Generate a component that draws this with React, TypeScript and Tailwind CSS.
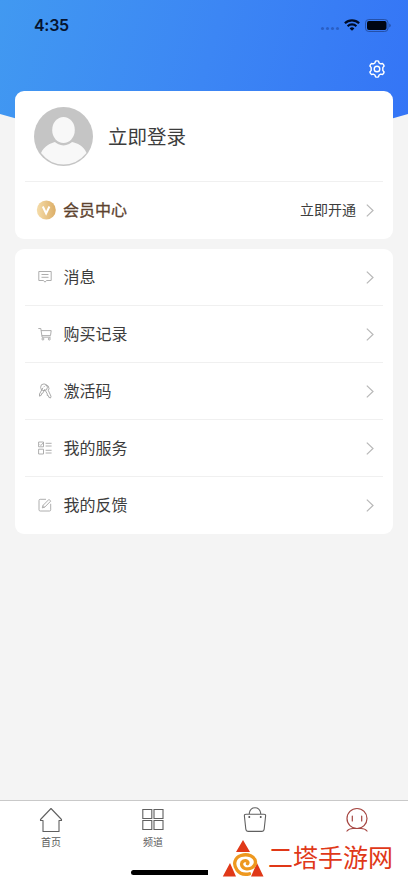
import React from 'react';

type IconProps = { className?: string };

const ChevronIcon: React.FC = () => (
  <svg className="w-2 h-[13px] shrink-0" viewBox="0 0 8 13" fill="none" stroke="#b8b8b8" strokeWidth="1.2">
    <path d="M.8.6 7 6.500.8 12.400" />
  </svg>
);

const GearIcon: React.FC<IconProps> = ({ className }) => (
  <svg className={className} viewBox="0 0 18 18" fill="none" stroke="#fff" strokeWidth="1.4" strokeLinejoin="round">
    <path d="M7.500 1.200Q9 .6 10.500 1.200L11.100 3 12.700 3.900 14.500 3.500Q15.800 4.500 16.100 6L14.800 7.600V10.400L16.100 12Q15.700 13.600 14.500 14.500L12.700 14.100 11.100 15 10.500 16.800Q9 17.400 7.500 16.800L6.900 15 5.300 14.100 3.500 14.500Q2.200 13.500 1.900 12L3.200 10.400V7.600L1.900 6Q2.300 4.400 3.500 3.500L5.300 3.900 6.900 3z" />
    <circle cx="9" cy="9" r="2.800" />
  </svg>
);

const MessageIcon: React.FC = () => (
  <svg className="size-3.5" viewBox="0 0 14 14" fill="none" stroke="#a5a5a5" strokeWidth=".9">
    <path d="M.8 1.500h12.400v9H8.500L7 12.200l-1.500-1.700H.8z" strokeLinejoin="round" />
    <path d="M3.500 4.500h7M3.500 7.300h7" />
  </svg>
);

const CartIcon: React.FC = () => (
  <svg className="size-3.5" viewBox="0 0 14 14" fill="none" stroke="#a5a5a5" strokeWidth=".9">
    <path d="M.3 1.500h2.500l1.300 8.700h8.600M3.100 3.600h10.100l-.7 5H3.900" />
    <circle cx="4.900" cy="12" r="1" />
    <circle cx="11.300" cy="12" r="1" />
  </svg>
);

const KeysIcon: React.FC = () => (
  <svg className="w-3.5 h-4" viewBox="0 0 14 16" fill="none" stroke="#a0a0a0" strokeWidth=".9" strokeLinejoin="round">
    <circle cx="6" cy="4.300" r="3.400" />
    <path d="M5 4.700 1.500 11v2.200l1.800-1 .2-1.500 1.200-.4L7 6" />
    <path d="M7.500 2.300Q11 2 11 5.500L10.300 7.500l2.700 5.800-.5 1.700-1.700-.7-.3-1.500-1.300-.4.100-1.500L7.300 7.500" />
    <path d="M5.800 3.500h.8" />
  </svg>
);

const ServiceIcon: React.FC = () => (
  <svg className="size-3.5" viewBox="0 0 14 14" fill="none" stroke="#a5a5a5" strokeWidth=".9">
    <path d="M.6 1h4.900v4.800H.6zM.6 8.200h4.900V13H.6zM1.800 3.400l1.100 1.100 2.600-3M7.600 2.300h6M7.600 5h6M7.600 9.300h6M7.600 12h6" />
  </svg>
);

const FeedbackIcon: React.FC = () => (
  <svg className="size-3.5" viewBox="0 0 14 14" fill="none" stroke="#a5a5a5" strokeWidth=".9" strokeLinejoin="round">
    <path d="M8 1.300H2.200Q1 1.300 1 2.500v9.300Q1 13 2.200 13h9.300q1.200 0 1.200-1.200V5.800" />
    <path d="m4.300 9.900.6-2.400L11 1.400l1.700 1.700L6.700 9.200zM4.900 7.500l1.800 1.700" />
  </svg>
);

const menu = [
  { label: '消息', icon: <MessageIcon /> },
  { label: '购买记录', icon: <CartIcon /> },
  { label: '激活码', icon: <KeysIcon /> },
  { label: '我的服务', icon: <ServiceIcon /> },
  { label: '我的反馈', icon: <FeedbackIcon /> },
];

const StatusBar: React.FC = () => (
  <div className="flex h-[50px] items-center justify-between pl-[34px] pr-[17px] text-[#06142f]">
    <span className="font-[Inter,sans-serif] text-[16px] font-semibold leading-none tracking-[-0.3px]">4:35</span>
    <div className="flex items-center">
      <div className="mt-[7px] mr-[5px] flex gap-[2px]">
        <i className="size-[3px] rounded-full bg-[#2a5fc4]" />
        <i className="size-[3px] rounded-full bg-[#2a5fc4]" />
        <i className="size-[3px] rounded-full bg-[#2a5fc4]" />
        <i className="size-[3px] rounded-full bg-[#2a5fc4]" />
      </div>
      <svg className="w-4 h-3 mr-[5px]" viewBox="0 0 16 12" fill="none" stroke="#000c26" strokeWidth="2.200">
        <path d="M.9 4.300a10 10 0 0 1 14.200 0M3.600 7.200a6.300 6.300 0 0 1 8.800 0" />
        <path d="M5.600 9.400a3.500 3.500 0 0 1 4.800 0L8 11.800z" fill="#000c26" stroke="none" />
      </svg>
      <svg className="w-[26px] h-[13px]" viewBox="0 0 26 13">
        <rect x=".5" y=".5" width="22.500" height="12" rx="3.300" fill="none" stroke="#2450a8" />
        <rect x="2" y="2" width="19.500" height="9" rx="1.900" fill="#000614" />
        <path d="M24.200 4.500v4q1.500-.6 1.500-2t-1.500-2" fill="#2450a8" />
      </svg>
    </div>
  </div>
);

const Watermark: React.FC = () => (
  <div className="absolute bottom-0 right-0 flex h-[46px] w-[200px] items-start bg-white pl-[14px] pt-[3px]">
    <svg className="w-[42px] h-[37px] shrink-0" viewBox="0 0 42 37" fill="none">
      <path d="M21 0 28 12H14zM8 23 14 36.500H.8zM35 23 41.500 36.500H29z" fill="#e03818" />
      <path
        d="M27.500 33.800C22 35 17.500 33.500 15 30 10.500 24 13 17.500 19 15.500 26 13.300 33 16.500 33.500 22 33.500 27 28 30 23 28.500 19 27 18.500 22.500 21.500 21 24.500 20 27 21.800 25.500 23.800"
        stroke="#ee981f"
        strokeWidth="3.300"
        strokeLinecap="round"
      />
    </svg>
    <span className="ml-1 mt-[4px] whitespace-nowrap text-[25px] leading-[25px] text-[#e03818]">二塔手游网</span>
  </div>
);

const TabBar: React.FC = () => (
  <nav className="relative h-[83px] border-t border-[#c9c9c9] bg-white">
    <div className="grid grid-cols-4 pt-[6px] text-[10px] text-[#5c5c5c]">
      <div className="flex flex-col items-center">
        <svg className="size-[26px]" viewBox="0 0 26 26" fill="none" stroke="#606060" strokeWidth="1.100" strokeLinejoin="round">
          <path d="M13 1.500 2.500 12.500v1H5V24.500h16v-11h2.500v-1z" />
        </svg>
        <span className="mt-[2px] leading-[14px]">首页</span>
      </div>
      <div className="flex flex-col items-center">
        <svg className="size-[26px]" viewBox="0 0 26 26" fill="none" stroke="#606060" strokeWidth="1.100">
          <path d="M2.800 2.500h9v9h-9zM14 2.500h9v9h-9zM2.800 13.500h9v9h-9zM14 13.500h9v9h-9z" />
        </svg>
        <span className="mt-[2px] leading-[14px]">频道</span>
      </div>
      <div className="flex flex-col items-center">
        <svg className="size-[26px]" viewBox="0 0 26 26" fill="none" stroke="#606060" strokeWidth="1.100">
          <path d="M4 7.300h18Q23.800 7.300 23.600 9l-1.400 13q-.3 2.400-2.500 2.400H6.300q-2.200 0-2.500-2.400L2.400 9Q2.200 7.300 4 7.300zM7.300 7V6Q8.300.7 13 .7T18.700 6v1" />
          <path d="M7.300 9v2M18.700 9v2" strokeWidth="1.600" />
        </svg>
      </div>
      <div className="flex flex-col items-center">
        <svg className="size-[26px]" viewBox="0 0 26 26" fill="none" stroke="#a54540" strokeWidth="1.200" strokeLinecap="round">
          <circle cx="13" cy="11.500" r="10" />
          <path d="M8.300 9v5M17.700 9v5M3 24q2-2.500 6-2.500h8q4 0 6 2.500" />
        </svg>
      </div>
    </div>
    <div className="absolute bottom-[8px] left-[131px] h-[5px] w-[146px] rounded-full bg-black" />
    <Watermark />
  </nav>
);

const App: React.FC = () => {
  return (
    <div className="flex h-[883px] w-[408px] flex-col overflow-hidden bg-[#f4f4f4] font-['Noto_Sans_CJK_SC',sans-serif] text-[#3c3c3c]">
      <header className="h-[150px] shrink-0 bg-linear-[105deg,#4199f1_0%,#3c86f4_50%,#3474f6_100%] [clip-path:path('M0_0H408V114Q204_175_0_114Z')]">
        <StatusBar />
        <div className="flex justify-end pr-[22px] pt-[10px]">
          <GearIcon className="size-[18px]" />
        </div>
      </header>

      <main className="relative -mt-[59px] flex flex-1 flex-col gap-[10px] px-[15px]">
        {/* Profil */}
        <section className="h-[148px] rounded-[9px] bg-white px-[10px]">
          <div className="flex h-[91px] items-center border-b border-[#f0f0f0] pl-[9px]">
            <svg className="size-[59px]" viewBox="0 0 59 59">
              <circle cx="29.500" cy="29.500" r="29.500" fill="#c5c5c5" />
              <path d="M7 46C10 39 17 36 21 35q8.500 5 17 0c5 1 12 4 14.500 11Q43 57.500 29.500 57.500T7 46" fill="#f8f8f8" />
              <ellipse cx="29.500" cy="23.500" rx="13" ry="15" fill="#c5c5c5" />
              <ellipse cx="29.500" cy="23" rx="11.300" ry="13" fill="#f8f8f8" />
            </svg>
            <span className="ml-[15px] text-[19.5px] leading-none">立即登录</span>
          </div>
          <div className="flex h-[57px] items-center pl-[11px] pr-[9px]">
            <svg className="size-5 -mt-[2px]" viewBox="0 0 20 20">
              <defs>
                <linearGradient id="gold">
                  <stop stopColor="#f5dca9" />
                  <stop offset="1" stopColor="#dcae67" />
                </linearGradient>
              </defs>
              <circle cx="10.300" cy="10" r="9.500" fill="url(#gold)" />
              <path d="m6.800 6.500 3.300 7 3.300-7" fill="none" stroke="#fff" strokeWidth="2" />
            </svg>
            <span className="ml-[7px] pb-[3px] text-[16px] leading-none text-[#5d432f] [-webkit-text-stroke:0.3px]">会员中心</span>
            <span className="ml-auto mr-[10px] pb-[3px] text-[14px] leading-none">立即开通</span>
            <ChevronIcon />
          </div>
        </section>

        {/* Menu */}
        <section className="h-[285px] rounded-[9px] bg-white px-[10px]">
          {menu.map((item) => (
            <div
              key={item.label}
              className="flex h-[57px] items-center border-b border-[#f0f0f0] pl-[13px] pr-[9px] last:border-transparent"
            >
              {item.icon}
              <span className="ml-[11.5px] pb-[2px] text-[16px] leading-none">{item.label}</span>
              <span className="ml-auto">
                <ChevronIcon />
              </span>
            </div>
          ))}
        </section>
      </main>

      <TabBar />
    </div>
  );
};

export default App;
